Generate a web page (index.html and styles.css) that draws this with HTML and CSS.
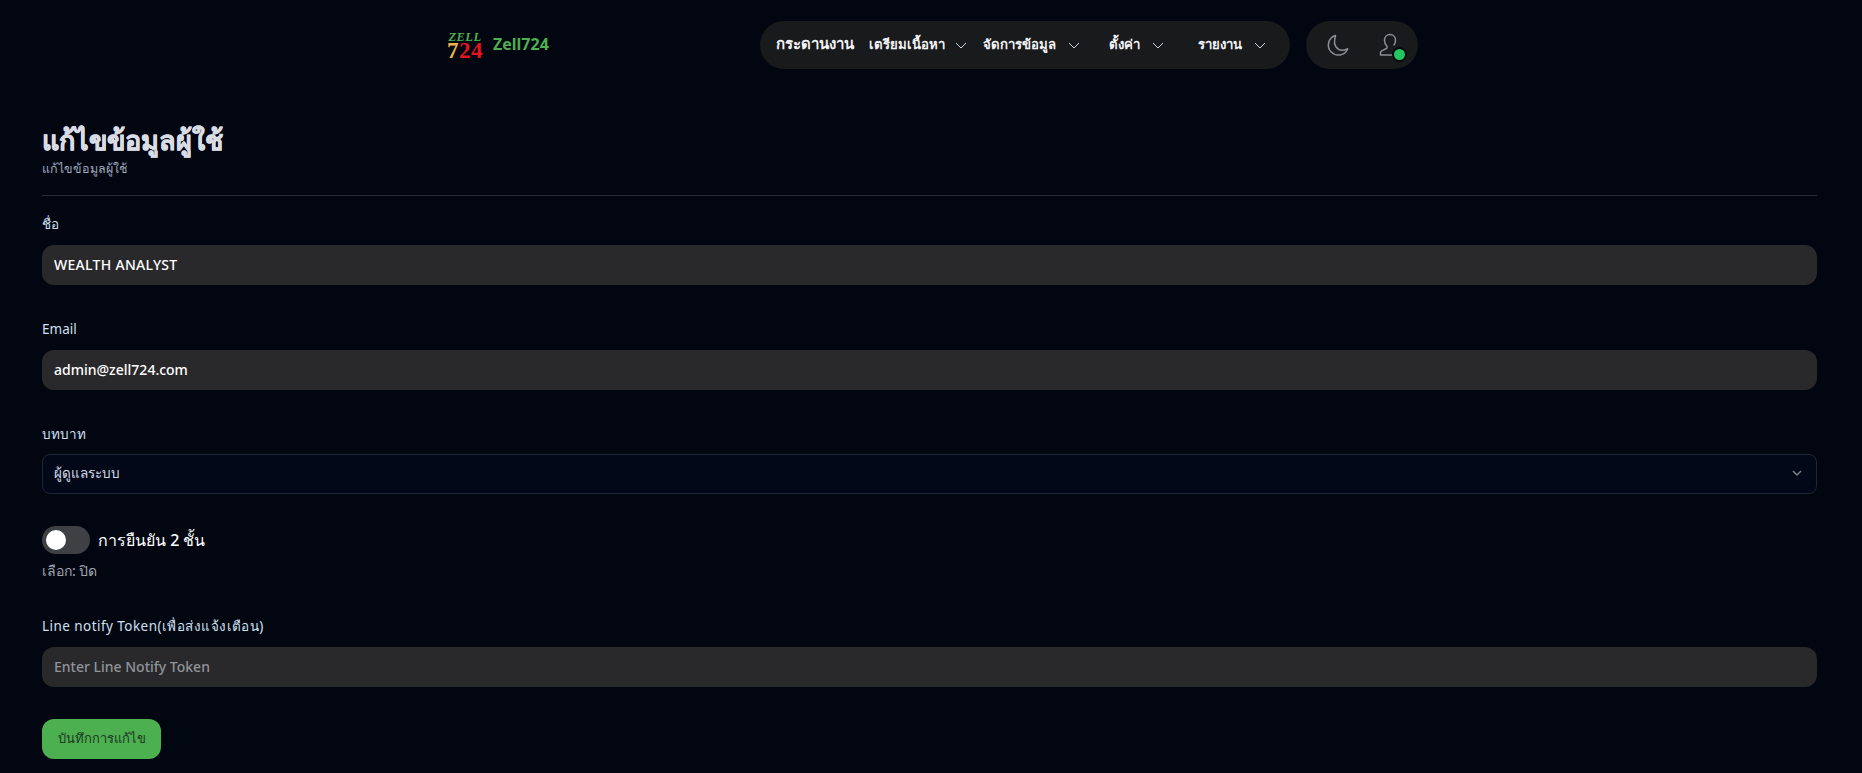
FILE: index.html
```html
<!DOCTYPE html>
<html lang="th">
<head>
<meta charset="utf-8">
<title>แก้ไขข้อมูลผู้ใช้</title>
<link rel="stylesheet" href="styles.css">
</head>
<body>
<header class="topbar">
  <a class="brand">
    <span class="logo"><span class="logo-zell">ZELL</span><span class="logo-num"><span class="seven">7</span>24</span></span>
    <span class="brand-name">Zell724</span>
  </a>
  <nav class="nav pill">
    <a class="nav-item first">กระดานงาน</a>
    <a class="nav-item w1">เตรียมเนื้อหา <svg class="chev" viewBox="0 0 12 7"><path d="M1 1l5 5 5-5"/></svg></a>
    <a class="nav-item w2">จัดการข้อมูล <svg class="chev" viewBox="0 0 12 7"><path d="M1 1l5 5 5-5"/></svg></a>
    <a class="nav-item w3">ตั้งค่า <svg class="chev" viewBox="0 0 12 7"><path d="M1 1l5 5 5-5"/></svg></a>
    <a class="nav-item w4">รายงาน <svg class="chev" viewBox="0 0 12 7"><path d="M1 1l5 5 5-5"/></svg></a>
  </nav>
  <div class="tools pill">
    <svg class="tool-icon" viewBox="0 0 24 24"><path d="M9.500 2.500a10 10 0 1 0 12.200 13.200c-1.600 1.200-3.600 1.800-5.600 1.600-5.400-.5-8.600-5.600-7.400-10.300.2-1.600.4-3 .8-4.500z"/></svg>
    <span class="avatar">
      <svg class="tool-icon" viewBox="0 0 24 24"><path d="M12 1.500c-3.300 0-5.500 2.500-5.500 5.700 0 2.400 1 4.500 2.300 6 .6.800.5 1.800-.4 2.300L3.800 17.800c-.8.400-1.300 1-1.300 1.900v2.300h13"/><path d="M12 1.500c3.300 0 5.500 2.500 5.500 5.700 0 1.800-.6 3.500-1.500 4.800"/></svg>
      <span class="status"></span>
    </span>
  </div>
</header>

<main class="page">
  <div class="page-head">
    <h1>แก้ไขข้อมูลผู้ใช้</h1>
    <p>แก้ไขข้อมูลผู้ใช้</p>
  </div>
  <form class="form">
    <div class="field">
      <label>ชื่อ</label>
      <input class="input name" type="text" value="WEALTH ANALYST">
    </div>
    <div class="field mail">
      <label>Email</label>
      <input class="input" type="text" value="admin@zell724.com">
    </div>
    <div class="field role">
      <label class="low">บทบาท</label>
      <div class="select">
        <span>ผู้ดูแลระบบ</span>
        <svg class="select-chev" viewBox="0 0 12 8"><path d="M2 2l4 4 4-4"/></svg>
      </div>
    </div>
    <div class="toggle-field">
      <div class="toggle-row">
        <span class="toggle"><span class="knob"></span></span>
        <span class="toggle-label">การยืนยัน 2 ชั้น</span>
      </div>
      <div class="hint">เลือก: ปิด</div>
    </div>
    <div class="field line">
      <label class="wide">Line notify Token(เพื่อส่งแจ้งเตือน)</label>
      <input class="input" type="text" placeholder="Enter Line Notify Token">
    </div>
    <button class="save" type="button">บันทึกการแก้ไข</button>
  </form>
</main>
</body>
</html>
```
FILE: styles.css
```css
* { box-sizing: border-box; }
html, body { margin: 0; padding: 0; }
body {
  background: #020611;
  color: #e5e7eb;
  font-family: "Noto Sans", "Noto Sans CJK SC", sans-serif;
  font-size: 14px;
  height: 773px;
  overflow: hidden;
}
.topbar {
  height: 90px;
  padding: 21px 0 0 447px;
  display: flex;
  align-items: flex-start;
}
.pill {
  height: 48px;
  border-radius: 24px;
  background: #191a1c;
  display: flex;
  align-items: center;
}
.brand {
  width: 313px;
  height: 48px;
  display: flex;
  align-items: center;
  gap: 10px;
}
.logo {
  width: 36px;
  height: 25px;
  display: flex;
  flex-direction: column;
  align-items: center;
  font-family: "Liberation Serif", serif;
  font-weight: 700;
  line-height: 1;
}
.logo-zell {
  color: #4caf50;
  font-size: 12.500px;
  font-style: italic;
  height: 9px;
  line-height: 9px;
  letter-spacing: .5px;
}
.logo-num {
  color: #e3141f;
  font-size: 23px;
  height: 16px;
  line-height: 17px;
  letter-spacing: .5px;
}
.seven { color: #f2b14c; }
.brand-name {
  color: #4caf50;
  font-size: 16px;
  font-weight: 700;
  padding-bottom: 2px;
}
.nav {
  width: 530px;
  padding: 0 0 2px 16px;
  color: #f3f4f6;
}
.nav-item {
  font-size: 13.200px;
  font-weight: 600;
  display: flex;
  align-items: center;
  white-space: nowrap;
  justify-content: space-between;
}
.nav-item.first { font-size: 15px; width: 93px; }
.w1 { width: 98px; margin-right: 16px; }
.w2 { width: 97px; margin-right: 29px; }
.w3 { width: 55px; margin-right: 34px; }
.w4 { width: 68px; }
.chev {
  width: 12px;
  height: 7px;
  flex: none;
  margin-top: 2px;
}
.chev path {
  fill: none;
  stroke: #d1d5db;
  stroke-width: 1;
}
.tools {
  width: 112px;
  margin-left: 16px;
  padding-left: 20px;
  gap: 28px;
}
.tool-icon {
  width: 24px;
  height: 24px;
  display: block;
  fill: none;
  stroke: #8b8d92;
  stroke-width: 1.500;
  stroke-linejoin: round;
  stroke-linecap: round;
}
.avatar { position: relative; display: block; }
.status {
  position: absolute;
  right: -3px;
  bottom: -3px;
  width: 11px;
  height: 11px;
  border-radius: 50%;
  background: #22c55e;
  box-shadow: 0 0 0 2px #05070c;
}
.page { padding: 0 45px 0 42px; }
.page-head {
  height: 106px;
  border-bottom: 1px solid #2a2e39;
  padding-top: 35px;
}
.page-head h1 {
  margin: 0;
  font-size: 27px;
  line-height: 30px;
  font-weight: 800;
  color: #d9dce3;
  -webkit-text-stroke: .5px #d9dce3;
}
.page-head p {
  margin: 5px 0 0;
  font-size: 12.500px;
  line-height: 17px;
  color: #9fa9bd;
}
.form { display: block; padding-top: 18px; }
.field { height: 105px; }
.mail { height: 104px; }
.role { height: 103px; }
.line { height: 103px; }
label {
  display: block;
  height: 31px;
  line-height: 20px;
  font-size: 13.500px;
  color: #cfe0f2;
}
label.low { padding-top: 1px; }
label.wide { letter-spacing: .45px; }
.input {
  display: block;
  width: 100%;
  height: 40px;
  border: 0;
  outline: 0;
  border-radius: 12px;
  background: #29292b;
  color: #fff;
  font: 500 14px "Noto Sans", sans-serif;
  padding: 0 12px 2px;
}
.input.name { letter-spacing: .3px; }
.input::placeholder { color: #90939a; opacity: 1; }
.select {
  height: 40px;
  border: 1px solid #1f2637;
  border-radius: 8px;
  background: #020817;
  padding: 0 13px 2px 11px;
  display: flex;
  align-items: center;
  justify-content: space-between;
  font-size: 13.500px;
  color: #d6dce6;
}
.select-chev {
  width: 12px;
  height: 8px;
}
.select-chev path {
  fill: none;
  stroke: #7d8086;
  stroke-width: 1.500;
}
.toggle-field { height: 90px; }
.toggle-row {
  display: flex;
  align-items: center;
  gap: 8px;
}
.toggle {
  width: 48px;
  height: 28px;
  border-radius: 14px;
  background: #3f4044;
  padding: 4px;
}
.knob {
  display: block;
  width: 20px;
  height: 20px;
  border-radius: 50%;
  background: #fff;
}
.toggle-label {
  font-size: 16px;
  color: #fff;
  font-weight: 500;
}
.hint {
  margin-top: 7px;
  font-size: 14px;
  line-height: 20px;
  color: #a0a6b1;
}
.save {
  display: block;
  width: 119px;
  height: 40px;
  border: 0;
  border-radius: 12px;
  background: #4caf50;
  color: #1f3a23;
  font: 400 13px "Noto Sans", sans-serif;
  padding: 0 0 2px;
}
```
